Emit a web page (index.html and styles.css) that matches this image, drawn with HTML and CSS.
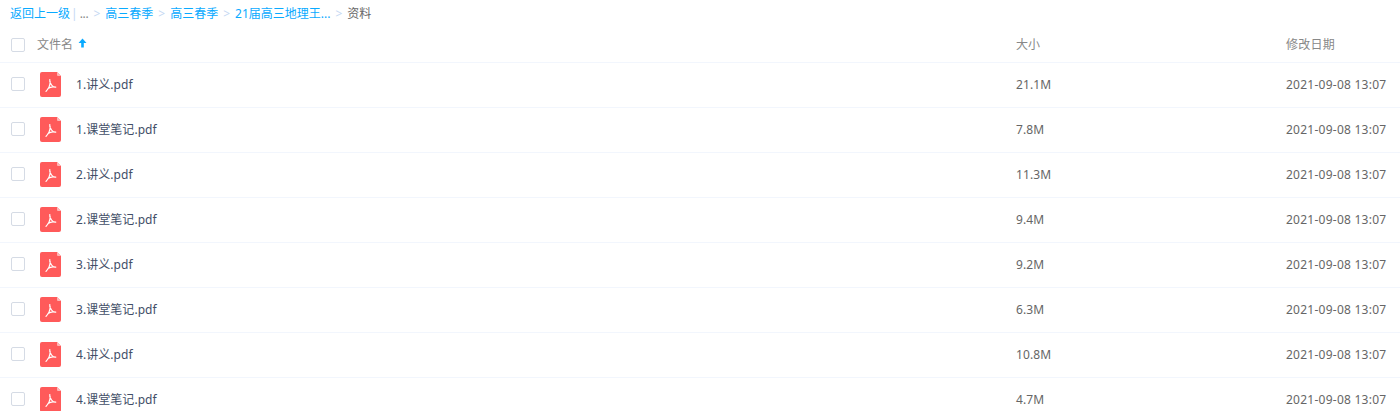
FILE: index.html
```html
<!DOCTYPE html>
<html lang="zh-CN">
<head>
    <meta charset="UTF-8">
    <title>资料</title>
    <link rel="stylesheet" href="styles.css">
</head>
<body>
    <div class="breadcrumb">
        <a href="#">返回上一级</a>
        <span class="pipe">|</span>
        <span class="dots">...</span>
        <span class="sep">&gt;</span>
        <a href="#">高三春季</a>
        <span class="sep">&gt;</span>
        <a href="#">高三春季</a>
        <span class="sep">&gt;</span>
        <a href="#">21届高三地理王...</a>
        <span class="sep">&gt;</span>
        <span class="current">资料</span>
    </div>
    <div class="file-list">
        <div class="row head">
            <span class="check"></span>
            <div class="name">文件名
                <svg class="arrow" width="9" height="10" viewBox="0 0 9 10"><path d="M4.5 0.5 L8.5 5 H5.8 V9.5 H3.2 V5 H0.5 Z" fill="#09aaff"/></svg>
            </div>
            <div class="size">大小</div>
            <div class="date">修改日期</div>
        </div>
        <div class="row">
            <span class="check"></span>
            <svg class="pdf" viewBox="0 0 21 25"><use href="#pdf-icon"/></svg>
            <div class="name">1.讲义.pdf</div>
            <div class="size">21.1M</div>
            <div class="date">2021-09-08 13:07</div>
        </div>
        <div class="row">
            <span class="check"></span>
            <svg class="pdf" viewBox="0 0 21 25"><use href="#pdf-icon"/></svg>
            <div class="name">1.课堂笔记.pdf</div>
            <div class="size">7.8M</div>
            <div class="date">2021-09-08 13:07</div>
        </div>
        <div class="row">
            <span class="check"></span>
            <svg class="pdf" viewBox="0 0 21 25"><use href="#pdf-icon"/></svg>
            <div class="name">2.讲义.pdf</div>
            <div class="size">11.3M</div>
            <div class="date">2021-09-08 13:07</div>
        </div>
        <div class="row">
            <span class="check"></span>
            <svg class="pdf" viewBox="0 0 21 25"><use href="#pdf-icon"/></svg>
            <div class="name">2.课堂笔记.pdf</div>
            <div class="size">9.4M</div>
            <div class="date">2021-09-08 13:07</div>
        </div>
        <div class="row">
            <span class="check"></span>
            <svg class="pdf" viewBox="0 0 21 25"><use href="#pdf-icon"/></svg>
            <div class="name">3.讲义.pdf</div>
            <div class="size">9.2M</div>
            <div class="date">2021-09-08 13:07</div>
        </div>
        <div class="row">
            <span class="check"></span>
            <svg class="pdf" viewBox="0 0 21 25"><use href="#pdf-icon"/></svg>
            <div class="name">3.课堂笔记.pdf</div>
            <div class="size">6.3M</div>
            <div class="date">2021-09-08 13:07</div>
        </div>
        <div class="row">
            <span class="check"></span>
            <svg class="pdf" viewBox="0 0 21 25"><use href="#pdf-icon"/></svg>
            <div class="name">4.讲义.pdf</div>
            <div class="size">10.8M</div>
            <div class="date">2021-09-08 13:07</div>
        </div>
        <div class="row">
            <span class="check"></span>
            <svg class="pdf" viewBox="0 0 21 25"><use href="#pdf-icon"/></svg>
            <div class="name">4.课堂笔记.pdf</div>
            <div class="size">4.7M</div>
            <div class="date">2021-09-08 13:07</div>
        </div>
    </div>
    <svg class="defs" width="0" height="0">
        <symbol id="pdf-icon" viewBox="0 0 21 25">
            <path d="M2 0 H17 L21 4 V23 A2 2 0 0 1 19 25 H2 A2 2 0 0 1 0 23 V2 A2 2 0 0 1 2 0 Z" fill="#ff5a5a"/>
            <path d="M17 0 L21 4 H18 A1 1 0 0 1 17 3 Z" fill="#ffb8b8"/>
            <path d="M9.8 7.5 C9.4 9 10 11.2 11.5 13 C12.6 14.4 14 15.2 15.7 15.2 M10.2 9.5 C10.2 13 8.5 16.8 6 19.4 M15.7 15.2 C13 14.4 10.2 14.9 8 16.4" fill="none" stroke="#fff" stroke-width="1.2" stroke-linecap="round"/>
        </symbol>
    </svg>
</body>
</html>
```

FILE: styles.css
```css
body {
    margin: 0;
    height: 411px;
    overflow: hidden;
    background-color: #fff;
    font-family: "Noto Sans", "Noto Sans CJK SC", sans-serif;
    font-size: 12px;
    color: #666;
}
a {
    color: #09aaff;
    text-decoration: none;
}
.defs {
    display: block;
}
.breadcrumb {
    display: flex;
    align-items: center;
    height: 27px;
    padding-left: 10px;
    padding-bottom: 1px;
    box-sizing: border-box;
}
.pipe {
    margin: 0 2px 0 1px;
    color: #c5d8f3;
}
.dots {
    letter-spacing: -0.3px;
    color: #888;
}
.sep {
    margin: 0 5px;
    color: #c5d8f3;
}
.current {
    color: #666;
}
.row {
    display: flex;
    align-items: center;
    box-sizing: border-box;
    height: 45px;
    padding-bottom: 1px;
    border-bottom: 1px solid #f2f6fd;
    color: #424e67;
}
.row.head {
    height: 36px;
    padding: 1px 0 0;
    color: #888;
}
.check {
    flex: none;
    width: 12px;
    height: 12px;
    margin: 0 0 1px 11px;
    border: 1px solid #d5dbe5;
    border-radius: 2px;
}
.head .check {
    margin-bottom: 0;
}
.pdf {
    flex: none;
    width: 21px;
    height: 25px;
    margin: 0 15px;
}
.name, .size, .date {
    line-height: 16px;
    margin-top: 1px;
}
.head .name, .head .size, .head .date {
    margin-top: 0;
}
.name {
    flex: 1;
    letter-spacing: 0.05px;
}
.head .name {
    margin-left: 12px;
}
.arrow {
    margin-left: 2px;
    vertical-align: 1px;
}
.size {
    width: 270px;
    letter-spacing: 0.1px;
    color: #666;
}
.date {
    width: 114px;
    letter-spacing: 0.25px;
    color: #666;
}
.head .size, .head .date {
    color: #888;
}
```
